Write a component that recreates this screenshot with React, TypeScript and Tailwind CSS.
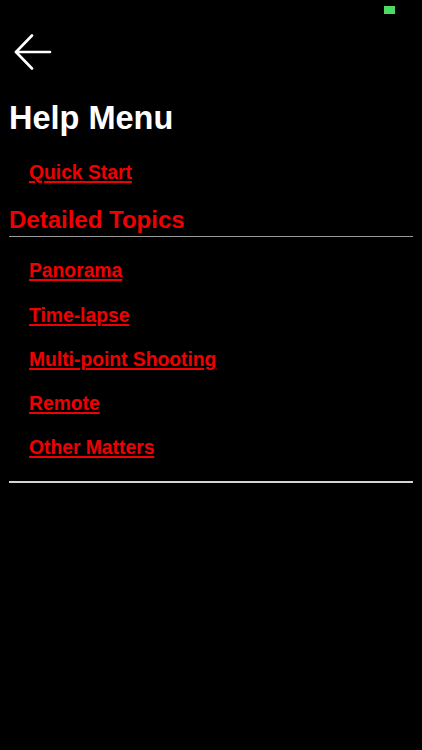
import React from "react";

const topics = ["Panorama", "Time-lapse", "Multi-point Shooting", "Remote", "Other Matters"];

const TopicLink: React.FC<{ label: string }> = ({ label }) => (
  <a
    href="#"
    className="block pl-[29px] text-[19.3px] leading-[44.25px] font-bold text-[#f00000] underline decoration-[1.5px] underline-offset-[2px]"
  >
    {label}
  </a>
);

export default function App() {
  return (
    <div className="min-h-[750px] w-full bg-black font-['Liberation_Sans',Arial,sans-serif] text-white">
      {/* status bar */}
      <div className="flex h-[20px] justify-end pr-[27px] pt-[6px]">
        <div className="h-[8px] w-[11px] bg-[#4cd964]" />
      </div>

      {/* back */}
      <button className="ml-[14px] mt-[14px] block h-[36px] w-[38px]">
        <svg width="38" height="36" viewBox="0 0 38 36" fill="none" stroke="white" strokeWidth="2.6" strokeLinecap="round">
          <path d="M2 18H36" />
          <path d="M18 1.5L2 18L18 34.5" strokeLinejoin="round" />
        </svg>
      </button>

      <h1 className="mt-[28px] pl-[9px] text-[32.5px] leading-[40px] font-bold">Help Menu</h1>

      <div className="mt-[13px]">
        <TopicLink label="Quick Start" />
      </div>

      <div className="mx-[9px] mt-[9px] border-b border-[#9a9a9a]">
        <h2 className="text-[24px] leading-[32px] font-bold text-[#f00000]">Detailed Topics</h2>
      </div>

      <div className="mt-[12px]">
        {topics.map((t) => (
          <TopicLink key={t} label={t} />
        ))}
      </div>

      <div className="mx-[9px] mt-[10px] h-[2px] bg-[#d4d4d4]" />
    </div>
  );
}
